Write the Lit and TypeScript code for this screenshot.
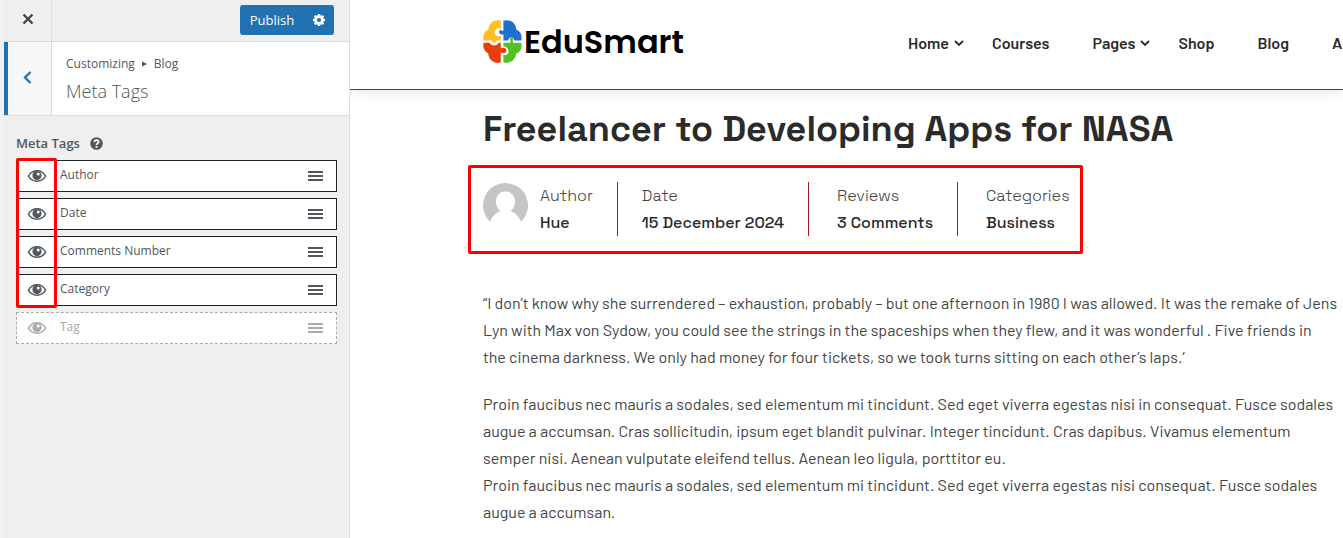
import { LitElement, html, css, svg } from "lit";
import { customElement } from "lit/decorators.js";

const tags = [
  { name: "Author", on: true },
  { name: "Date", on: true },
  { name: "Comments Number", on: true },
  { name: "Category", on: true },
  { name: "Tag", on: false },
];

const eye = svg`<svg class="eye" viewBox="0 0 20 14" width="20" height="14" aria-hidden="true">
  <path fill="none" stroke="currentColor" stroke-width="1.4" d="M1.4 7.2C3.400 3.600 6.400 1.800 10 1.800s6.600 1.800 8.600 5.400C16.600 10.600 13.600 12.300 10 12.300S3.400 10.600 1.400 7.200Z"/>
  <path fill="currentColor" fill-rule="evenodd" d="M10 2a4.600 4.600 0 1 1 0 9.200A4.600 4.600 0 0 1 10 2Zm1.200 1.400a1.500 1.500 0 1 0 0 3a1.500 1.500 0 0 0 0-3Z"/>
</svg>`;

const bars = svg`<svg viewBox="0 0 15 12" width="15" height="12" aria-hidden="true"><path fill="currentColor" d="M0 1h15v2H0zM0 5h15v2H0zM0 9h15v2H0z"/></svg>`;

@customElement("customizer-panel")
class CustomizerPanel extends LitElement {
  static styles = css`
    :host { display: block; box-sizing: border-box; background: #efefef; border-left: 4px solid #f1f1f1; border-right: 1px solid #dcdcde; color: #50575e; font: 13px/20px "Segoe UI", "Open Sans", sans-serif; }
    button { font: inherit; border: 0; margin: 0; padding: 0; background: none; color: inherit; }
    .top { display: grid; grid-template-columns: 48px 1fr auto; height: 41px; border-bottom: 1px solid #dcdcde; }
    .close { display: grid; place-items: center; padding-bottom: 3px; border-right: 1px solid #dcdcde; color: #3c434a; }
    .actions { grid-column: 3; display: flex; margin: 5px 15px 6px 0; background: #2271b1; color: #fff; border-radius: 3px; }
    .publish { width: 64px; }
    .gear { width: 30px; display: grid; place-items: center; }
    .head { display: flex; background: #fff; border-bottom: 1px solid #dcdcde; height: 73px; }
    .back { width: 48px; box-sizing: border-box; border-left: 4px solid #2271b1; border-right: 1px solid #dcdcde; background: #f6f7f7; color: #2271b1; display: grid; place-items: center; padding: 0 4px 2px 0; }
    .titles { padding: 12px 14px; }
    .crumb { display: flex; align-items: center; gap: 7px; font-size: 12px; }
    h2 { font-size: 18px; font-weight: 300; line-height: 26px; margin: 4px 0 0; }
    .body { padding: 16px 12px; }
    .label { display: flex; gap: 10px; align-items: center; font-weight: 600; line-height: 22px; }
    .zone { position: relative; }
    ul { list-style: none; margin: 6px 0 0; padding: 0; display: grid; gap: 6px; }
    li { display: flex; align-items: center; height: 32px; box-sizing: border-box; border: 1px solid #222; background: #fff; padding: 0 13px 0 10px; }
    li.off { border: 1px dashed #aaa; color: #aaa; }
    .name { flex: 1; padding: 0 0 2px 13px; font-size: 12px; }
    .toggle { width: 20px; height: 14px; }
    svg { display: block; }
    .mark { position: absolute; left: 0; top: -2px; width: 41px; height: 150px; box-sizing: border-box; border: 3px solid #f00; border-radius: 2px; pointer-events: none; }
  `;

  render() {
    return html`
      <div class="top">
        <button class="close" aria-label="Close"><svg width="12" height="12" viewBox="0 0 12 12"><path d="M1.500 1.500l9 9M10.500 1.500l-9 9" stroke="currentColor" stroke-width="2.300"/></svg></button>
        <div class="actions">
          <button class="publish">Publish</button>
          <button class="gear" aria-label="Publish settings"><svg width="14" height="14" viewBox="0 0 14 14"><g fill="currentColor"><path fill-rule="evenodd" d="M7 2.500a4.500 4.500 0 1 0 0 9A4.500 4.500 0 0 0 7 2.500Zm0 2.400a2.100 2.100 0 1 1 0 4.200a2.100 2.100 0 0 1 0-4.200Z"/><path d="M5.800 1h2.400l.4 2.200H5.400zM5.800 13h2.400l.4-2.200H5.400zM1 5.800v2.400l2.200.4V5.400zM13 5.800v2.400l-2.200.4V5.400zM1.900 3.600l1.700-1.700 2 1.300-2.400 2.400zM12.100 3.600l-1.700-1.700-2 1.300 2.400 2.400zM1.900 10.400l1.700 1.700 2-1.300-2.400-2.400zM12.100 10.400l-1.700 1.700-2-1.300 2.400-2.400z"/></g></svg></button>
        </div>
      </div>
      <header class="head">
        <button class="back" aria-label="Back"><svg width="9" height="13" viewBox="0 0 9 13"><path d="M7.500 1L2 6.500L7.500 12" fill="none" stroke="currentColor" stroke-width="2.300"/></svg></button>
        <div class="titles">
          <div class="crumb">Customizing <svg width="5" height="6" viewBox="0 0 5 6"><path fill="currentColor" d="M0 .5l5 2.500-5 2.500z"/></svg> Blog</div>
          <h2>Meta Tags</h2>
        </div>
      </header>
      <div class="body">
        <div class="label">Meta Tags
          <svg width="13" height="13" viewBox="0 0 13 13"><circle cx="6.500" cy="6.500" r="6.300" fill="currentColor"/><path d="M4.400 5.100C4.400 2.500 8.600 2.500 8.600 4.900C8.600 6.200 6.500 6.300 6.500 8M6.500 9v1.700" fill="none" stroke="#fff" stroke-width="1.800"/></svg>
        </div>
        <div class="zone">
          <ul>
            ${tags.map((t) => html`<li class=${t.on ? "on" : "off"}>
              <button class="toggle" aria-label="Toggle ${t.name}">${eye}</button>
              <span class="name">${t.name}</span>${bars}
            </li>`)}
          </ul>
          <div class="mark"></div>
        </div>
      </div>`;
  }
}

const nav = [
  { name: "Home", menu: true },
  { name: "Courses", menu: false },
  { name: "Pages", menu: true },
  { name: "Shop", menu: false },
  { name: "Blog", menu: false },
  { name: "About", menu: false },
];

const meta = [
  ["Author", "Hue"],
  ["Date", "15 December 2024"],
  ["Reviews", "3 Comments"],
  ["Categories", "Business"],
];

@customElement("site-preview")
class SitePreview extends LitElement {
  static styles = css`
    :host { display: block; min-width: 0; overflow: hidden; background: #fff; color: #444; font: 16px/27px Barlow, Roboto, sans-serif; }
    a { color: inherit; text-decoration: none; }
    svg { display: block; flex: none; }
    .bar { display: flex; align-items: center; height: 83px; padding: 0 0 6px 133px; border-bottom: 1px solid #a51c1c; box-shadow: 0 2px 12px rgba(0, 0, 0, 0.1); }
    .logo { display: flex; align-items: center; gap: 2px; width: 425px; flex: none; color: #000; font: 600 32px/44px Poppins, Inter, sans-serif; }
    nav { display: flex; flex: none; padding-top: 3px; color: #2b2b2b; font: 600 16px/24px Barlow, Roboto, sans-serif; }
    .link { display: flex; align-items: center; gap: 5px; margin-right: 43px; }
    .link.menu { margin-right: 28px; }
    article { padding: 18px 0 0 133px; }
    h1 { margin: 0; color: #2b2b2b; font: 700 36px/42px "Space Grotesk", "Open Sans", sans-serif; white-space: nowrap; }
    .meta { display: flex; width: max-content; box-sizing: border-box; height: 89px; margin: 15px 0 0 -15px; padding: 14px 10px 0 12px; border: 3px solid #f00; border-radius: 2px; font-family: "Space Grotesk", "Open Sans", sans-serif; font-weight: 300; }
    .item { height: 54px; padding: 0 24px 0 28px; border-right: 1px solid #a51c1c; white-space: nowrap; }
    .item:nth-of-type(1) { padding-left: 0; }
    .item:nth-of-type(2) { padding-left: 24px; }
    .item:last-child { border: 0; padding-right: 0; }
    .item b { display: block; color: #2b2b2b; font-weight: 500; }
    .avatar { margin: 1px 12px 0 0; }
    .text { padding-top: 35px; }
    p { margin: 0 0 20px; white-space: nowrap; }
  `;

  render() {
    return html`
      <header class="bar">
        <a class="logo" href="#">
          <svg width="39" height="43" viewBox="0 0 39 43">
            <path fill="#fdbf23" d="M17.800 .8V9.200A3.900 3.900 0 1 0 17.800 15.600V20.400H13.600C14 23.400 8.400 23.400 8.800 20.400H.6C-.6 15 1.500 11 5.300 9.800C5.600 3 11.500-1.200 17.800 .8Z"/>
            <path fill="#1f6fd0" d="M20.400 .8C27-1.200 32.800 2.800 33.200 9.400C37.500 11 39.600 15 38.200 20.400H31.200C31 16.200 25.600 16.200 25.400 20.400V20.400H20.400V14.200C16.400 16.400 14.600 10.400 17.400 10.200Q19 10 20.400 11Z"/>
            <path fill="#ea3e0a" d="M.6 22.800H6.800C8 26.400 14.400 26.400 15.600 22.800H17.800V28.600C21 26.600 24.200 28.600 23.200 31.200C22.400 33.600 20 33.400 17.800 32.400V42.400C11.500 44 5.600 40 5.300 33.400C1.500 31.800-.6 28 .6 22.800Z"/>
            <path fill="#55c022" d="M20.400 22.800H27.400V20.600C24.600 16.600 32 16.600 29.800 20.600V22.800H38.200C39.600 28 37.500 32 33.200 33.600C32.800 40 27 44 20.400 42.400V35C27 36.500 27.500 26.500 20.400 26.400Z"/>
          </svg>EduSmart</a>
        <nav>${nav.map((n) => html`<a class="link ${n.menu ? "menu" : ""}" href="#">${n.name}${n.menu ? html`<svg width="10" height="7" viewBox="0 0 10 7"><path d="M1 1l4 4 4-4" fill="none" stroke="currentColor" stroke-width="1.800"/></svg>` : ""}</a>`)}</nav>
      </header>
      <article>
        <h1>Freelancer to Developing Apps for NASA</h1>
        <div class="meta">
          <svg class="avatar" width="45" height="45" viewBox="0 0 45 45"><path fill="#c5c5c5" d="M22.500 0A22.500 22.500 0 0 0 7 38.800C9 34 12.500 29.500 17.500 28C9.500 22 12.500 8.500 22.500 8.500S35.500 22 27.500 28C32.500 29.500 36 34 38 38.800A22.500 22.500 0 0 0 22.500 0Z"/></svg>
          ${meta.map(([k, v]) => html`<div class="item">${k}<b>${v}</b></div>`)}
        </div>
        <div class="text">
          <p>“I don’t know why she surrendered – exhaustion, probably – but one afternoon in 1980 I was allowed. It was the remake of Jens<br>Lyn with Max von Sydow, you could see the strings in the spaceships when they flew, and it was wonderful . Five friends in<br>the cinema darkness. We only had money for four tickets, so we took turns sitting on each other’s laps.’</p>
          <p>Proin faucibus nec mauris a sodales, sed elementum mi tincidunt. Sed eget viverra egestas nisi in consequat. Fusce sodales<br>augue a accumsan. Cras sollicitudin, ipsum eget blandit pulvinar. Integer tincidunt. Cras dapibus. Vivamus elementum<br>semper nisi. Aenean vulputate eleifend tellus. Aenean leo ligula, porttitor eu.<br>Proin faucibus nec mauris a sodales, sed elementum mi tincidunt. Sed eget viverra egestas nisi consequat. Fusce sodales<br>augue a accumsan.</p>
        </div>
      </article>`;
  }
}

@customElement("app-root")
class AppRoot extends LitElement {
  static styles = css`
    :host { display: grid; grid-template-columns: 350px minmax(0, 1fr); height: 100vh; overflow: hidden; }
  `;
  render() {
    return html`<customizer-panel></customizer-panel><site-preview></site-preview>`;
  }
}
